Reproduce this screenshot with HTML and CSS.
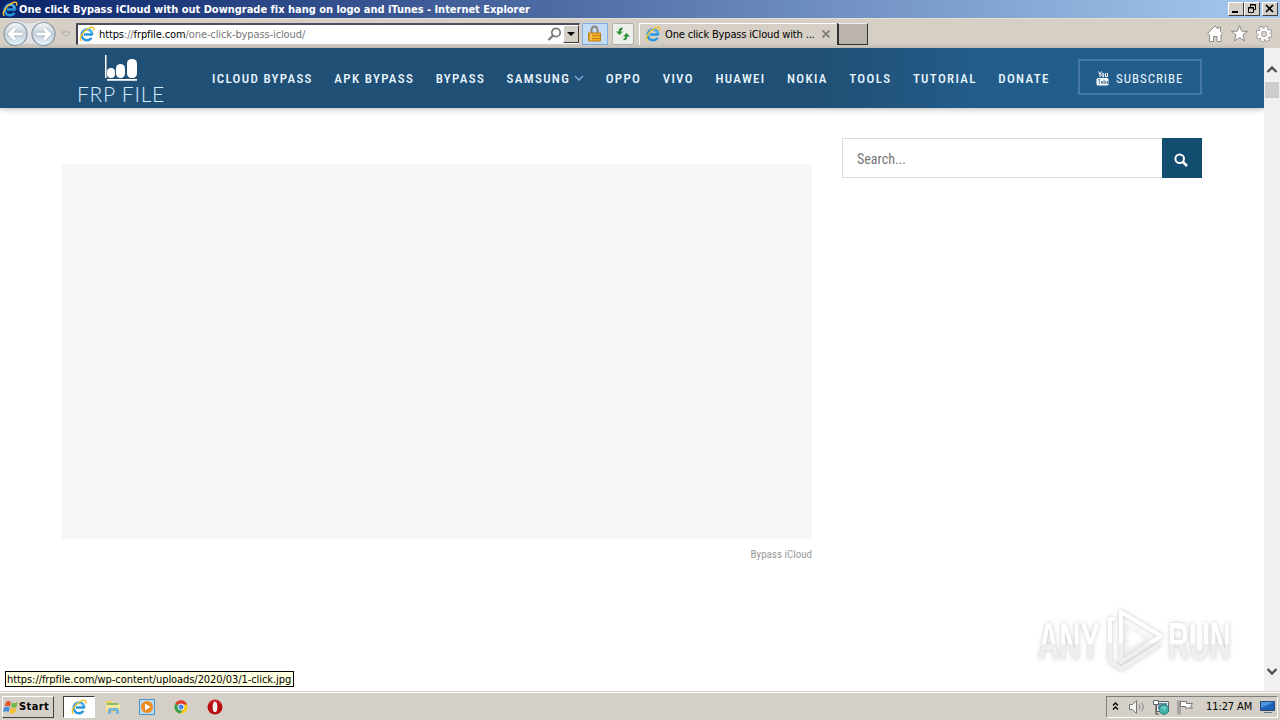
FILE: index.html
```html
<!DOCTYPE html>
<html lang="en">
  <head>
    <meta charset="utf-8">
    <title>One click Bypass iCloud</title>
    <link rel="stylesheet" href="styles.css">
  </head>
  <body>
    <!-- shared icons -->
    <svg class="defs">
      <symbol id="ie" viewBox="0 0 16 16">
        <path d="M13.800 8.600H4.800M13.400 8.600A5.400 5.400 0 1 0 12.500 11.900" fill="none" stroke="#2a96e0" stroke-width="2.500"/>
        <path d="M12.600 7A4.800 4.800 0 0 0 4.600 5.200" fill="none" stroke="#8bd6fb" stroke-width="1"/>
        <path d="M2.600 14.700C-1 14 3 6 9 2.600C13 .3 16 1 14.400 4.600" fill="none" stroke="#f2c32b" stroke-width="1.400"/>
      </symbol>
    </svg>
    <div class="titlebar">
      <svg class="ie"><use href="#ie"/></svg>
      <span class="title">One click Bypass iCloud with out Downgrade fix hang on logo and iTunes - Internet Explorer</span>
      <div class="win-buttons">
        <button class="win"><svg width="14" height="12"><path d="M3 9h6" stroke="#000" stroke-width="2"/></svg></button>
        <button class="win"><svg width="14" height="12" fill="none" stroke="#000"><path d="M5.500 4V1.500h5v5H9M5 2h6M3 5h6"/><path d="M3.500 4.500h5v5h-5z"/></svg></button>
        <button class="win close"><svg width="14" height="12"><path d="M3 2l7 7M10 2l-7 7" stroke="#000" stroke-width="1.700"/></svg></button>
      </div>
    </div>
    <div class="toolbar">
      <svg class="history" width="76" height="30">
        <defs>
          <linearGradient id="glass" x2="0" y2="1"><stop offset="0" stop-color="#f6f8fa"/><stop offset=".5" stop-color="#c4d0db"/><stop offset="1" stop-color="#e9f7ff"/></linearGradient>
        </defs>
        <path d="M15 1C22 1 23 4 29 4S37 1 43 1A14 14 0 0 1 43 28C37 28 35 25 29 25S22 28 15 28A14 14 0 0 1 15 1z" fill="#e4e4e6" stroke="#c9c6c4"/>
        <circle cx="15.500" cy="15" r="11.500" fill="url(#glass)" stroke="#8a96a2" stroke-width="1.200"/>
        <circle cx="43.500" cy="15" r="11.500" fill="url(#glass)" stroke="#8a96a2" stroke-width="1.200"/>
        <path d="M22.500 15H10M15 9.500L9.500 15L15 20.500M36.500 15H49M44 9.500L49.500 15L44 20.500" fill="none" stroke="#9dacba" stroke-width="4.500"/>
        <path d="M22.500 15H10M15 9.500L9.500 15L15 20.500M36.500 15H49M44 9.500L49.500 15L44 20.500" fill="none" stroke="#fff" stroke-width="3.200"/>
        <path d="M62 13h8l-4 4.500z" fill="#dedad6" stroke="#aaa5a0"/>
      </svg>
      <div class="address">
        <svg class="ie"><use href="#ie"/></svg>
        <span class="url"><b>https</b>://<b>frpfile.com</b>/one-click-bypass-icloud/</span>
        <svg class="find" width="15" height="15" fill="none" stroke="#777" stroke-width="1.700"><circle cx="9" cy="5.500" r="4.200"/><path d="M6 8.500L1.500 13" stroke-width="2.200"/></svg>
        <button class="drop"><svg width="14" height="14"><path d="M3 5h8L7 9z"/></svg></button>
      </div>
      <div class="lock">
        <svg width="16" height="18"><path d="M4.500 9V5a3 3.500 0 0 1 6 0V9" fill="none" stroke="#8c8678" stroke-width="2"/><path d="M1.500 8h12v8h-12z" fill="#f0ae24" stroke="#bc7d12"/><path d="M2 10.500h11M2 13.500h11" stroke="#c98a18"/><path d="M4 8.500v7" stroke="#ffe089"/></svg>
      </div>
      <div class="refresh">
        <svg width="16" height="16" fill="none" stroke="#2c8233" stroke-width="1.800"><path d="M7.500 2.500Q4.500 2.500 4.500 6"/><path d="M1 5.500h7L4.500 9z" fill="#2c9333" stroke="none"/><path d="M8.500 13.500Q11.500 13.500 11.500 10"/><path d="M8 10.500h7L11.500 7z" fill="#2c9333" stroke="none"/></svg>
      </div>
      <div class="tab">
        <svg class="ie"><use href="#ie"/></svg>
        <span class="tab-text">One click Bypass iCloud with ...</span>
        <svg class="tab-close" width="10" height="10"><path d="M1.500 1.500l7 7M8.500 1.500l-7 7" stroke="#85817c" stroke-width="1.800"/></svg>
      </div>
      <div class="new-tab"></div>
      <svg class="tools" width="68" height="20" fill="#fff" stroke="#8c8a86">
        <path d="M1.500 9.500L9 2L12 5V3h2.500v4.500L16.500 9.500L15 11v6.500h-4v-5H7.500v5h-4V11z"/>
        <path d="M33.500 1.500l2.200 5.700 5.800.2-4.600 3.600 1.700 6-5.100-3.500-5.100 3.500 1.700-6-4.600-3.600 5.800-.2z"/>
        <circle cx="58" cy="10" r="6.500" fill="none" stroke-width="3.500" stroke-dasharray="3.200 1.900"/>
        <circle cx="58" cy="10" r="4.600" fill="none" stroke-width="4.200"/>
        <circle cx="58" cy="10" r="6.200" fill="none" stroke="#fff" stroke-width="2.500" stroke-dasharray="2.800 2.070"/>
        <circle cx="58" cy="10" r="4.300" fill="none" stroke="#fff" stroke-width="2.600"/>
      </svg>
    </div>
    <div class="viewport">
      <div class="page">
        <div class="header">
          <div class="logo">
            <svg width="34" height="28" fill="#fff"><path d="M1 1h1.500v23H1zM3 25h30v1.800H3z"/><rect x="3" y="14" width="8" height="10" rx="4"/><rect x="12" y="10" width="9" height="14" rx="4.500"/><rect x="23" y="5" width="10" height="19" rx="4.500"/></svg>
            <span class="logo-text">FRP FILE</span>
          </div>
          <div class="menu">
            <span>ICLOUD BYPASS</span>
            <span>APK BYPASS</span>
            <span>BYPASS</span>
            <span class="has-sub">SAMSUNG<svg width="10" height="6"><path d="M1 1l4 4 4-4" fill="none" stroke="#7fb0dc" stroke-width="1.300"/></svg></span>
            <span>OPPO</span>
            <span>VIVO</span>
            <span>HUAWEI</span>
            <span>NOKIA</span>
            <span>TOOLS</span>
            <span>TUTORIAL</span>
            <span>DONATE</span>
          </div>
          <div class="subscribe">
            <svg width="13" height="15"><path d="M2.500.5l1.500 3V6M5.500.5L4 3.500" fill="none" stroke="#fff"/><rect x="6" y="2.300" width="1.700" height="3.500" rx=".8" fill="none" stroke="#fff"/><path d="M9.500 2v3.500h2V2" fill="none" stroke="#fff"/><rect x=".5" y="7" width="12" height="7.500" rx="1.500" fill="#fff"/><path d="M2 8.800h2.500M3.300 9v4M5.500 10v2.500h1V10M8 8.500V13M8.300 10.300h1v2.200h-1M12 12.500h-1v-2h1v1h-1" fill="none" stroke="#235d8c" stroke-width=".7"/></svg>
            <span class="subscribe-text">SUBSCRIBE</span>
          </div>
        </div>
        <div class="content">
          <div class="main">
            <div class="image"></div>
            <div class="caption">Bypass iCloud</div>
          </div>
          <div class="search">
            <div class="search-input">Search...</div>
            <div class="search-button"><svg width="14" height="14" fill="none" stroke="#fff" stroke-width="2"><circle cx="5.700" cy="5.700" r="4.300"/><path d="M9 9l4 4" stroke-width="2.500"/></svg></div>
          </div>
        </div>
      </div>
      <div class="scrollbar">
        <svg width="16" height="14"><path d="M3.500 10L8 5.500L12.500 10" fill="none" stroke="#505050" stroke-width="2.300"/></svg>
        <div class="thumb"></div>
        <svg class="down" width="16" height="14"><path d="M3.500 4L8 8.500L12.500 4" fill="none" stroke="#505050" stroke-width="2.300"/></svg>
      </div>
      <div class="watermark">
        <span class="mark">ANY</span>
        <svg width="62" height="66" viewBox="0 0 62 66" fill="none" stroke-width="4" stroke-linejoin="round">
          <defs><linearGradient id="wm" gradientUnits="userSpaceOnUse" x1="0" y1="0" x2="0" y2="66"><stop offset=".52" stop-color="#fff"/><stop offset=".54" stop-color="#efefef"/></linearGradient></defs>
          <path d="M17 4L57 28L17 54zM17 4v50M11 11H6V53L17 61L56 36" stroke="url(#wm)"/>
          <path d="M22 17v28l22-15z" stroke="#eee" stroke-width="1"/>
        </svg>
        <span class="mark run">RUN</span>
      </div>
      <div class="status">https://frpfile.com/wp-content/uploads/2020/03/1-click.jpg</div>
    </div>
    <div class="taskbar">
      <div class="start">
        <svg width="16" height="16"><path d="M3 3q2-2 5 0L7 7.500Q4.500 6 1.500 7.500z" fill="#e4572a"/><path d="M9 3.500q3 1.500 6-.5L13.500 8q-3 1.500-5.500 0z" fill="#74b943"/><path d="M1.200 8.500q3-1.500 5.500 0L5.500 13Q3 11.500 0 13z" fill="#3e8edb"/><path d="M7.700 9q3 1.500 5.600 0L12 13.800q-3 1.500-5.500 0z" fill="#f5bd29"/></svg>
        <span class="start-text">Start</span>
      </div>
      <div class="task active"><svg class="ie"><use href="#ie"/></svg></div>
      <div class="task"><svg width="16" height="16"><path d="M1 2h6l1 2h6v9H1z" fill="#f1cf62"/><path d="M2 4h11v3H2z" fill="#87bd67"/><path d="M1 6h14v6H1z" fill="#f9e69b"/><path d="M3 15v-4q0-2 2-2h7q2 0 2 2v4h-3v-3H6v3z" fill="#72b6df"/></svg></div>
      <div class="task"><svg width="16" height="16"><path d="M.5.5h15v15H.5z" fill="#b8dcf5" stroke="#4c94c7"/><circle cx="8" cy="8" r="6" fill="#f28a1c"/><path d="M6 4.500L11.500 8L6 11.500z" fill="#fff"/></svg></div>
      <div class="task"><svg width="14" height="14" viewBox="0 0 16 16"><circle cx="8" cy="8" r="7.500" fill="#fbc918"/><path d="M8 8L1.500 4.200A7.500 7.500 0 0 1 15 5H8z" fill="#df3c2e"/><path d="M8 8L1.500 4.200A7.500 7.500 0 0 0 7.500 15.500L11 9z" fill="#36a150"/><circle cx="8" cy="8" r="3.500" fill="#4888ee" stroke="#fff"/></svg></div>
      <div class="task"><svg width="16" height="16"><circle cx="8" cy="8" r="7.500" fill="#b60f12"/><path d="M2 5A7 7 0 0 1 14 5" fill="none" stroke="#d44" stroke-width="1"/><ellipse cx="8" cy="8" rx="2.300" ry="5.200" fill="#fff"/><path d="M8 3.500v9" stroke="#ddd"/></svg></div>
      <div class="tray">
        <svg width="90" height="18" fill="none">
          <path d="M6 7.500L8.500 5L11 7.500M6 11.500L8.500 9L11 11.500" stroke="#000" stroke-width="1.400"/>
          <path d="M22.500 6.500h3l4-4v13l-4-4h-3z" fill="#f5f5f5" stroke="#777"/><path d="M32 6.500q2 2.500 0 5M34.500 4.500q3.500 4.500 0 9" stroke="#888"/>
          <path d="M49.500 3.500h12v10h-12z" fill="#eee" stroke="#666"/><path d="M51 5h9v6h-9z" fill="#5d91ac"/><path d="M46.500 2.500h5v4h-5z" fill="#fff" stroke="#666"/><path d="M49 6.500v9.500h3" stroke="#555" stroke-width="1.200"/><circle cx="57" cy="11.500" r="4.800" fill="#42b3a9" stroke="#237b80"/><path d="M54 10q3-2 5 0l-3 2" stroke="#8fe0d0"/>
          <path d="M71 2.500v14M73 2.500v14" stroke="#777"/><path d="M73.500 3.500h6v2h6l-2 3 2 1.500h-7v-1.500h-5z" fill="#fff" stroke="#777"/>
        </svg>
        <span class="clock">11:27 AM</span>
        <svg width="15" height="14"><path d="M.5 1.500h14v9H.5z" fill="#1e62b8" stroke="#29476f"/><path d="M1 2h13L1 8z" fill="#4a93df"/><path d="M4 12.500h8" stroke="#678"/></svg>
      </div>
    </div>
  </body>
</html>
```
FILE: styles.css
```css
* {
  box-sizing: border-box;
}
body {
  margin: 0;
  width: 1280px;
  height: 720px;
  overflow: hidden;
  display: flex;
  flex-direction: column;
  background: #fff;
  font: 11px "DejaVu Sans Condensed", "DejaVu Sans", sans-serif;
  font-stretch: condensed;
}
svg {
  display: block;
  flex: none;
}
span {
  white-space: nowrap;
}
button {
  padding: 0;
}
.defs {
  position: absolute;
  width: 0;
  height: 0;
}
.ie {
  width: 16px;
  height: 16px;
}

/* browser window */
.titlebar {
  height: 18px;
  display: flex;
  align-items: center;
  padding-left: 2px;
  background: linear-gradient(to right, #0a246a, #a6caf0);
  color: #fff;
}
.title {
  margin-left: 1px;
  font-weight: bold;
  letter-spacing: -0.02px;
}
.win-buttons {
  display: flex;
  margin-left: auto;
  padding-right: 2px;
}
.win {
  width: 16px;
  height: 14px;
  background: #d4d0c8;
  border: 1px solid;
  border-color: #fff #404040 #404040 #fff;
}
.close {
  margin-left: 2px;
}
.toolbar {
  height: 30px;
  display: flex;
  align-items: center;
  background: #d5cfc6;
  border-top: 1px solid #e2ddd5;
}
.address {
  width: 504px;
  height: 22px;
  display: flex;
  align-items: center;
  padding-left: 1px;
  background: #fff;
  border: 1px solid;
  border-color: #505060 #d4d0c8 #d4d0c8 #404050;
  border-width: 2px 1px 1px 2px;
}
.url {
  flex: 1;
  margin-left: 4px;
  letter-spacing: -0.11px;
  color: #777;
}
.url b {
  color: #000;
  font-weight: normal;
}
.drop {
  width: 16px;
  height: 18px;
  margin-left: 1px;
  background: #d4d0c8;
  border: 1px solid;
  border-color: #fff #404040 #404040 #fff;
}
.lock {
  width: 26px;
  height: 22px;
  margin-left: 2px;
  display: flex;
  justify-content: center;
  align-items: center;
  background: #c5dcf7;
  border: 1px solid #7daee5;
}
.refresh {
  width: 22px;
  height: 22px;
  margin-left: 4px;
  display: flex;
  justify-content: center;
  align-items: center;
  background: #edf0ea;
  border: 1px solid #b5b2ac;
  border-radius: 2px;
}
.tab {
  width: 197px;
  height: 22px;
  margin-left: 5px;
  display: flex;
  align-items: center;
  padding-left: 5px;
  border: 1px solid #fff;
  border-width: 1px 0 0 1px;
}
.tab-text {
  margin-left: 4px;
  letter-spacing: -0.16px;
}
.tab-close {
  margin-left: auto;
  margin-right: 5px;
}
.new-tab {
  width: 31px;
  height: 22px;
  margin-left: 1px;
  background: #bab4ac;
  border: 1px solid;
  border-color: #eee #333 #333 #333;
  border-width: 1px 1px 1px 2px;
}
.tools {
  margin-left: auto;
  margin-right: 6px;
}

/* site */
.viewport {
  height: 643px;
  display: flex;
  position: relative;
}
.page {
  width: 1264px;
  font-family: "Roboto Condensed", Roboto, sans-serif;
}
.header {
  height: 60px;
  display: flex;
  align-items: center;
  padding-left: 77px;
  background: linear-gradient(to right, #205075 65%, #235d8b 78%);
  box-shadow: 0 1px 6px rgba(0, 0, 0, 0.3);
  color: #fff;
}
.logo {
  width: 135px;
  height: 60px;
  padding-top: 6px;
}
.logo svg {
  margin-left: 27px;
}
.logo-text {
  display: block;
  font: 300 21px/23px Lato, sans-serif;
  letter-spacing: 0.75px;
  color: #d5edff;
}
.menu {
  width: 866px;
  display: flex;
  gap: 21.5px;
  font-size: 13px;
  font-weight: 500;
  letter-spacing: 1.32px;
  color: #e8f6ff;
}
.has-sub {
  display: flex;
  align-items: center;
  gap: 4px;
}
.subscribe {
  width: 124px;
  height: 36px;
  margin-bottom: 2px;
  display: flex;
  align-items: center;
  padding-left: 16px;
  padding-top: 2px;
  border: 2px solid #467aa5;
}
.subscribe-text {
  margin-left: 7px;
  font-size: 13px;
  letter-spacing: 0.95px;
  color: #e8f6ff;
}
.content {
  display: flex;
  padding: 30px 62px;
  gap: 30px;
}
.main {
  width: 750px;
  padding-top: 26px;
}
.image {
  height: 375px;
  background: #f6f6f6;
}
.caption {
  margin-top: 9px;
  text-align: right;
  font-size: 11px;
  color: #999;
}
.search {
  width: 360px;
  height: 40px;
  display: flex;
}
.search-input {
  flex: 1;
  display: flex;
  align-items: center;
  padding-left: 14px;
  padding-top: 2px;
  border: 1px solid #ddd;
  border-right: 0;
  font-size: 14px;
  color: #777;
}
.search-button {
  width: 40px;
  padding: 15px 0 0 12px;
  background: #124e70;
}
.scrollbar {
  width: 16px;
  display: flex;
  flex-direction: column;
  padding: 14px 0 12px;
  background: #f0f0f0;
}
.thumb {
  height: 16px;
  margin: 6px 1px;
  background: #cdcdcd;
}
.down {
  margin-top: auto;
}

/* things lying over the page */
.watermark {
  position: absolute;
  left: 1038px;
  top: 560px;
  display: flex;
  align-items: center;
  filter: drop-shadow(0 0 2px rgba(0, 0, 0, 0.22));
}
.mark {
  width: 104px;
  margin-right: -38px;
  font: bold 46px/60px "Liberation Sans", sans-serif;
  color: transparent;
  background: linear-gradient(#fff 54%, #efefef 55%);
  -webkit-background-clip: text;
  background-clip: text;
  transform: scale(0.64, 1.12);
  transform-origin: left;
}
.run {
  margin-left: 2px;
  transform: scale(0.63, 1.12);
}
.status {
  position: absolute;
  left: 5px;
  top: 623px;
  width: 289px;
  height: 16px;
  padding-left: 1px;
  line-height: 15px;
  letter-spacing: -0.07px;
  white-space: nowrap;
  background: #ffffe1;
  border: 1px solid #000;
}

/* taskbar */
.taskbar {
  height: 29px;
  display: flex;
  align-items: center;
  padding-left: 2px;
  padding-top: 1px;
  background: #d4d0c8;
  border-top: 1px solid #d4d0c8;
  box-shadow: inset 0 1px #fff;
}
.start {
  width: 52px;
  height: 22px;
  display: flex;
  align-items: center;
  border: 1px solid;
  border-color: #fff #404040 #404040 #fff;
}
.start-text {
  font-weight: bold;
  letter-spacing: 0.4px;
}
.task {
  width: 32px;
  height: 22px;
  margin-right: 2px;
  display: flex;
  justify-content: center;
  align-items: center;
}
.active {
  margin-left: 9px;
  background: #fff;
  border: 1px solid;
  border-color: #404040 #fff #fff #404040;
}
.tray {
  width: 172px;
  height: 22px;
  display: flex;
  align-items: center;
  margin-left: auto;
  margin-right: 2px;
  border: 1px solid;
  border-color: #808080 #fff #fff #808080;
}
.clock {
  width: 54px;
  margin-left: 9px;
  letter-spacing: -0.1px;
}
```
